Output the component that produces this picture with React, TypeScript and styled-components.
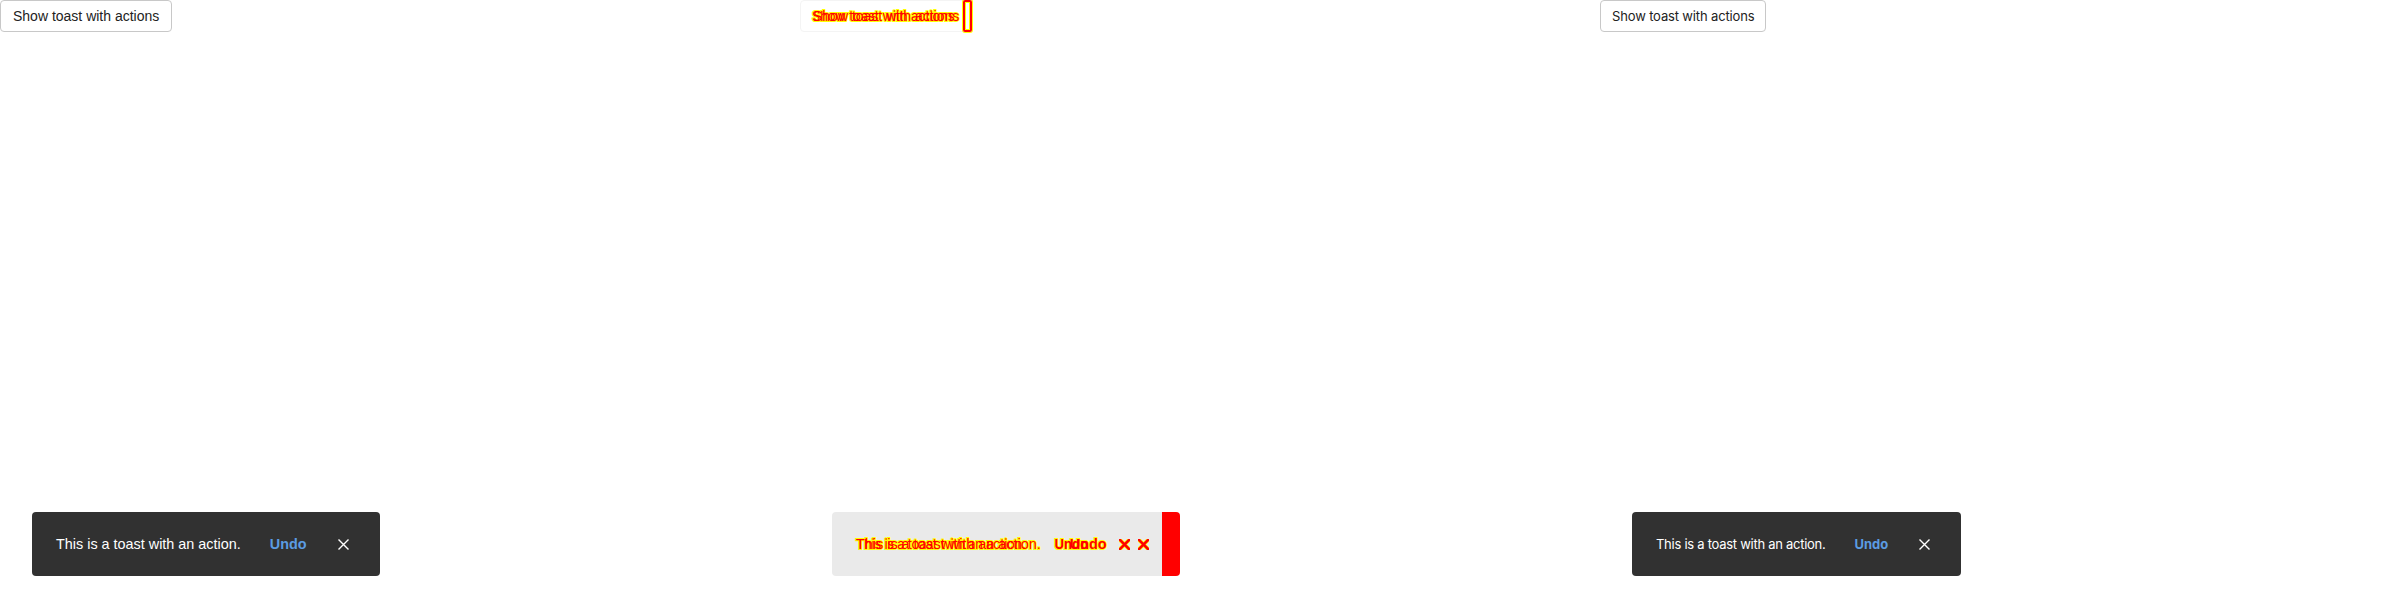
import React from "react";
import styled, { createGlobalStyle, css } from "styled-components";

type Tone = "normal" | "halo" | "fill";

type Variant = {
  font: string;
  button: { size: number; spacing: number; padX: number };
  message: { size: number; spacing: number };
  action: { size: number; spacing: number };
};

const CLASSIC: Variant = {
  font: `"Liberation Sans", Arial, sans-serif`,
  button: { size: 14, spacing: 0, padX: 12 },
  message: { size: 14.4, spacing: 0 },
  action: { size: 14.4, spacing: 0 },
};

const SYSTEM: Variant = {
  font: `Inter, "Liberation Sans", sans-serif`,
  button: { size: 13, spacing: -0.15, padX: 11 },
  message: { size: 13, spacing: -0.27 },
  action: { size: 13, spacing: 0 },
};

const GlobalStyle = createGlobalStyle`
  html, body {
    margin: 0;
    padding: 0;
    background: #ffffff;
  }
  body {
    font-family: "Liberation Sans", Arial, sans-serif;
  }
`;

const toneColor = (tone: Tone, normal: string) =>
  tone === "halo"
    ? css`
        color: #ffff00;
        -webkit-text-stroke: 2px #ffff00;
      `
    : tone === "fill"
    ? css`
        color: #ff0000;
      `
    : css`
        color: ${normal};
      `;

const Stage = styled.main`
  display: grid;
  grid-template-columns: repeat(3, 800px);
  width: 2400px;
  height: 600px;
`;

const Panel = styled.section`
  position: relative;
  height: 600px;
  overflow: hidden;
`;

/* ---------- trigger button ---------- */

const TriggerButton = styled.button<{ $v: Variant }>`
  display: block;
  margin: 0;
  padding: 7px ${(p) => p.$v.button.padX}px;
  font-family: ${(p) => p.$v.font};
  font-size: ${(p) => p.$v.button.size}px;
  letter-spacing: ${(p) => p.$v.button.spacing}px;
  line-height: 16px;
  color: #222222;
  background: #ffffff;
  border: 1px solid #c8c8c8;
  border-radius: 4px;
  white-space: nowrap;
`;

const DiffButtonFrame = styled.div`
  position: relative;
  box-sizing: border-box;
  width: 172px;
  height: 32px;
  border: 1px solid #f4f4f4;
  border-radius: 4px;
`;

const DiffLabel = styled.span<{ $v: Variant; $tone: Tone }>`
  position: absolute;
  left: ${(p) => p.$v.button.padX}px;
  top: 7px;
  white-space: nowrap;
  font-family: ${(p) => p.$v.font};
  font-size: ${(p) => p.$v.button.size}px;
  letter-spacing: ${(p) => p.$v.button.spacing}px;
  line-height: 16px;
  ${(p) => toneColor(p.$tone, "#222")}
`;

const DiffEdge = styled.span`
  position: absolute;
  top: -1px;
  left: 162px;
  box-sizing: border-box;
  width: 9px;
  height: 32px;
  border: 2px solid #ff0000;
  border-radius: 2px;
  box-shadow: 0 0 0 1px #ffff00, inset 0 0 0 1px #ffff00;
`;

/* ---------- toast ---------- */

const ToastFrame = styled.div`
  position: absolute;
  left: 32px;
  bottom: 24px;
  border-radius: 4px;
  background: #313131;
`;

const DiffToastFrame = styled.div`
  position: absolute;
  left: 32px;
  bottom: 24px;
  box-sizing: border-box;
  width: 348px;
  height: 64px;
  background: #eaeaea;
  border-right: 18px solid #ff0000;
  border-radius: 4px;
`;

const DiffLayer = styled.div`
  position: absolute;
  top: 0;
  left: 0;
`;

const ToastRow = styled.div<{ $v: Variant; $tone: Tone }>`
  display: flex;
  align-items: center;
  box-sizing: border-box;
  height: 64px;
  padding: 0 23px 0 24px;
  font-family: ${(p) => p.$v.font};
  line-height: 16px;
  white-space: nowrap;
  ${(p) => toneColor(p.$tone, "#ffffff")}
`;

const Message = styled.span<{ $v: Variant }>`
  font-size: ${(p) => p.$v.message.size}px;
  letter-spacing: ${(p) => p.$v.message.spacing}px;
`;

const UndoButton = styled.button<{ $v: Variant; $tone: Tone }>`
  margin: 0 0 0 21px;
  padding: 0 8px;
  border: 0;
  background: none;
  font-family: inherit;
  font-size: ${(p) => p.$v.action.size}px;
  letter-spacing: ${(p) => p.$v.action.spacing}px;
  line-height: 16px;
  font-weight: 700;
  cursor: pointer;
  ${(p) => toneColor(p.$tone, "#5b9ce3")}
`;

const CloseButton = styled.button<{ $tone: Tone }>`
  display: flex;
  margin: 0 0 0 15px;
  padding: 8px;
  border: 0;
  background: none;
  cursor: pointer;
  color: ${(p) =>
    p.$tone === "halo" ? "#ffff00" : p.$tone === "fill" ? "#ff0000" : "#ffffff"};
`;

const CloseIcon = ({ weight }: { weight: number }) => (
  <svg width="11" height="11" viewBox="0 0 11 11" fill="none">
    <path
      d="M1 1 L10 10 M10 1 L1 10"
      stroke="currentColor"
      strokeWidth={weight}
      strokeLinecap="square"
    />
  </svg>
);

const ToastContent = ({ v, tone }: { v: Variant; tone: Tone }) => (
  <ToastRow $v={v} $tone={tone}>
    <Message $v={v}>This is a toast with an action.</Message>
    <UndoButton $v={v} $tone={tone}>
      Undo
    </UndoButton>
    <CloseButton $tone={tone} aria-label="Close">
      <CloseIcon weight={tone === "normal" ? 1.4 : tone === "halo" ? 4 : 2.6} />
    </CloseButton>
  </ToastRow>
);

const ToastPanel = ({ v }: { v: Variant }) => (
  <Panel>
    <TriggerButton $v={v}>Show toast with actions</TriggerButton>
    <ToastFrame role="status">
      <ToastContent v={v} tone="normal" />
    </ToastFrame>
  </Panel>
);

const variants = [CLASSIC, SYSTEM];

const DiffPanel = () => (
  <Panel>
    <DiffButtonFrame>
      {variants.map((v) => (
        <DiffLabel key={`h${v.font}`} $v={v} $tone="halo">
          Show toast with actions
        </DiffLabel>
      ))}
      {variants.map((v) => (
        <DiffLabel key={`f${v.font}`} $v={v} $tone="fill">
          Show toast with actions
        </DiffLabel>
      ))}
      <DiffEdge />
    </DiffButtonFrame>
    <DiffToastFrame>
      {variants.map((v) => (
        <DiffLayer key={`h${v.font}`}>
          <ToastContent v={v} tone="halo" />
        </DiffLayer>
      ))}
      {variants.map((v) => (
        <DiffLayer key={`f${v.font}`}>
          <ToastContent v={v} tone="fill" />
        </DiffLayer>
      ))}
    </DiffToastFrame>
  </Panel>
);

export default function App() {
  return (
    <>
      <GlobalStyle />
      <Stage>
        <ToastPanel v={CLASSIC} />
        <DiffPanel />
        <ToastPanel v={SYSTEM} />
      </Stage>
    </>
  );
}
